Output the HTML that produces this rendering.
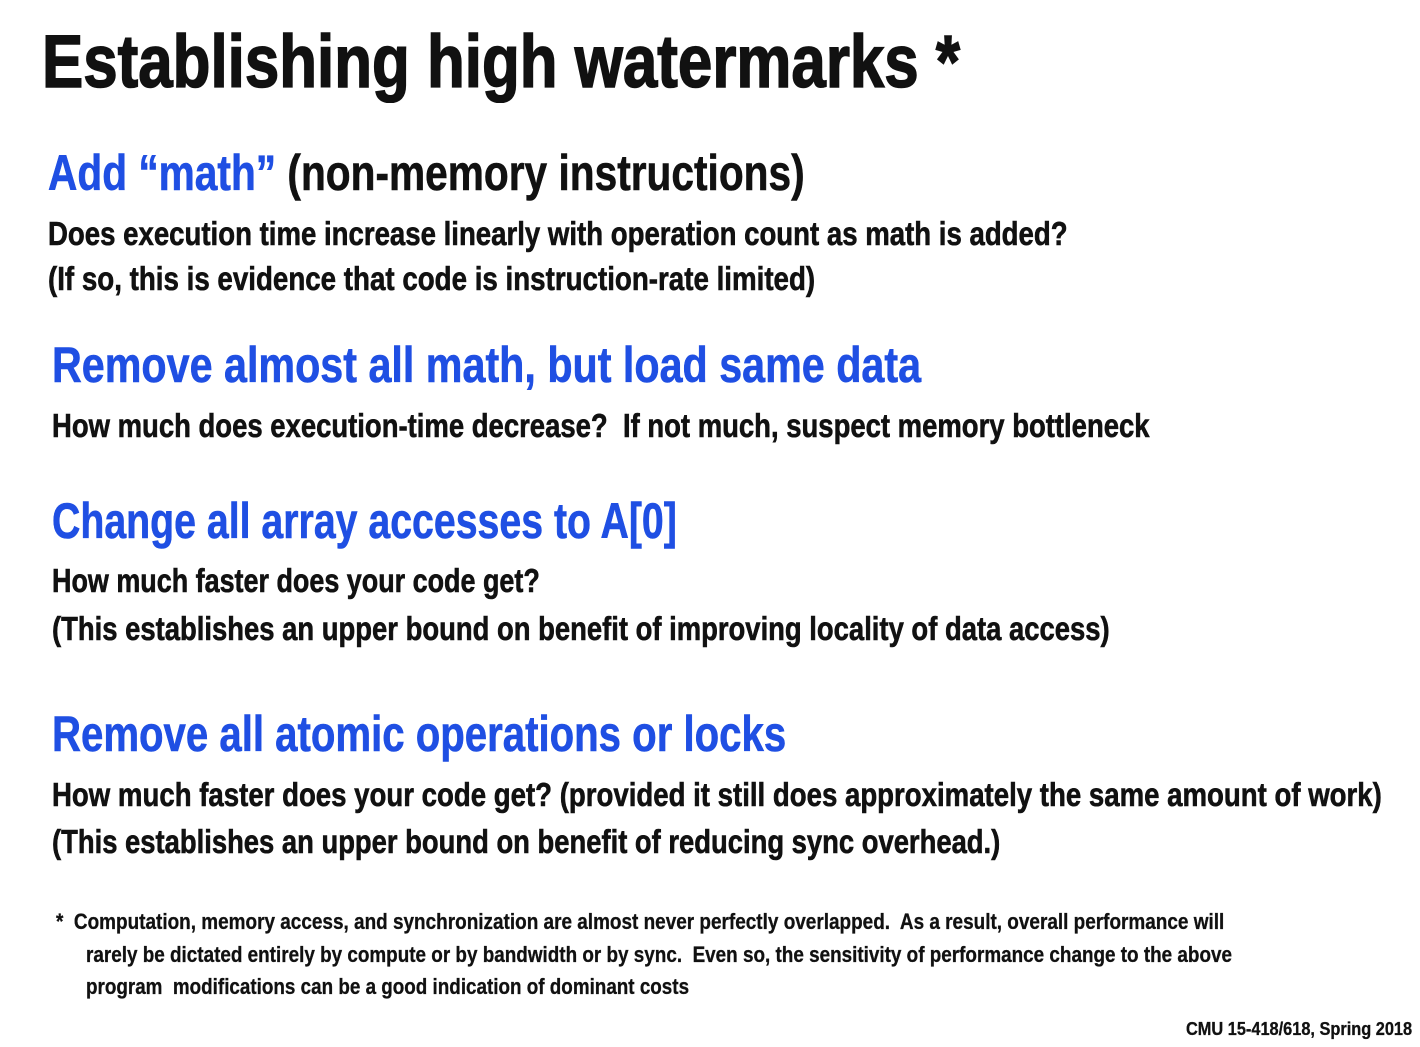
<!DOCTYPE html>
<html><head><meta charset="utf-8">
<style>
html,body{margin:0;padding:0;background:#fff;}
body{width:1420px;height:1047px;position:relative;overflow:hidden;}
.L{position:absolute;white-space:nowrap;line-height:1;font-family:"Liberation Sans Narrow","Liberation Sans",sans-serif;font-weight:bold;color:#111;transform-origin:0 0;-webkit-text-stroke:0.6px currentColor;}
.b{color:#1f4fe3;}
.t{-webkit-text-stroke:1.5px #111;}
.s{-webkit-text-stroke:0.3px #111;}
</style></head><body>
<div class="L t" style="left:42px;top:25px;font-size:74px;">Establishing high watermarks *</div>

<div class="L" style="left:48px;top:148px;font-size:50px;"><span class="b">Add “math”</span> (non-memory instructions)</div>
<div class="L" style="left:48px;top:217px;font-size:33px;">Does execution time increase linearly with operation count as math is added?</div>
<div class="L" style="left:48px;top:262px;font-size:33px;">(If so, this is evidence that code is instruction-rate limited)</div>

<div class="L b" style="left:52px;top:340px;font-size:50px;">Remove almost all math, but load same data</div>
<div class="L" style="left:52px;top:409px;font-size:33px;">How much does execution-time decrease?&nbsp; If not much, suspect memory bottleneck</div>

<div class="L b" style="left:52px;top:496px;font-size:50px;">Change all array accesses to A[0]</div>
<div class="L" style="left:52px;top:564px;font-size:33px;">How much faster does your code get?</div>
<div class="L" style="left:52px;top:612px;font-size:33px;">(This establishes an upper bound on benefit of improving locality of data access)</div>

<div class="L b" style="left:52px;top:709px;font-size:50px;">Remove all atomic operations or locks</div>
<div class="L" style="left:52px;top:778px;font-size:33px;">How much faster does your code get? (provided it still does approximately the same amount of work)</div>
<div class="L" style="left:52px;top:825px;font-size:33px;">(This establishes an upper bound on benefit of reducing sync overhead.)</div>

<div class="L s" style="left:56px;top:911px;font-size:22px;">* &nbsp;Computation, memory access, and synchronization are almost never perfectly overlapped.&nbsp; As a result, overall performance will</div>
<div class="L s" style="left:86px;top:944px;font-size:22px;">rarely be dictated entirely by compute or by bandwidth or by sync.&nbsp; Even so, the sensitivity of performance change to the above</div>
<div class="L s" style="left:86px;top:976px;font-size:22px;">program&nbsp; modifications can be a good indication of dominant costs</div>

<div class="L s" style="left:1186px;top:1020px;font-size:18px;">CMU 15-418/618, Spring 2018</div>

<script>
var W=[918,757,1020,767,869,1098,625,488,1058,734,1330,948,1168,1146,603,226];
var els=document.querySelectorAll('.L');
for(var i=0;i<els.length;i++){var w=els[i].offsetWidth;if(w>0)els[i].style.transform='scaleX('+(W[i]/w)+')';}
</script>
</body></html>
